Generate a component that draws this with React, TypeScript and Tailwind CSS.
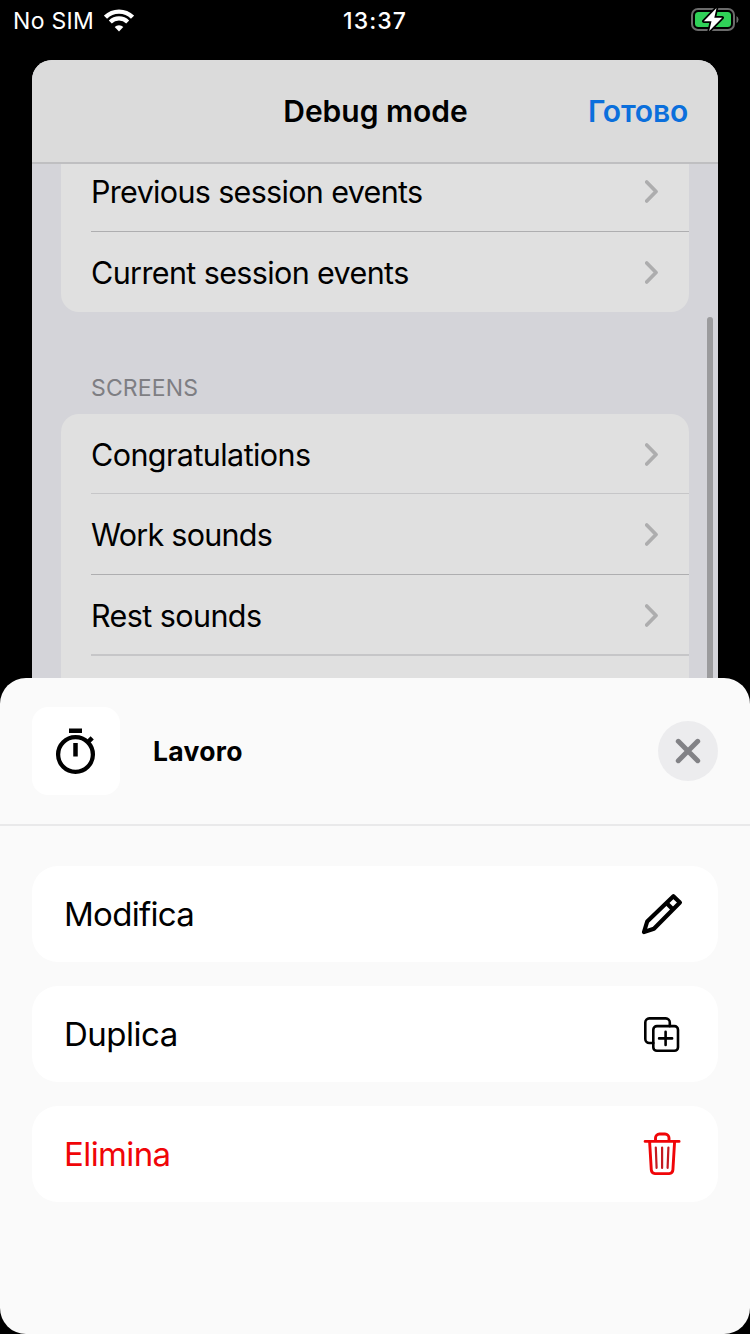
import type { ReactNode } from "react";

function Chevron() {
  return (
    <svg width="14" height="25" viewBox="0.3 -0.5 14 25" fill="none">
      <path d="M2 2.5 11.300 12 2 21.500" stroke="#adadae" strokeWidth="3.700" strokeLinecap="round" strokeLinejoin="round" />
    </svg>
  );
}

function Row({ label, tracking, divider }: { label: string; tracking: string; divider: string }) {
  return (
    <div className="pl-[30px]">
      <div className={`flex items-center justify-between pt-px pr-[30px] ${divider}`}>
        <span className={`pt-px text-[30.5px] whitespace-nowrap ${tracking}`}>{label}</span>
        <Chevron />
      </div>
    </div>
  );
}

function Action({ label, className, children }: { label: string; className: string; children: ReactNode }) {
  return (
    <button className="flex h-24 w-full items-center justify-between rounded-[26px] bg-white pr-8 pl-8">
      <span className={className}>{label}</span>
      {children}
    </button>
  );
}

function StatusBar() {
  return (
    <header className="grid h-[60px] grid-cols-3 items-start text-[23px] leading-[40px] text-white">
      <div className="flex h-[41px] items-center gap-[10px] pl-[13px]">
        <span className="tracking-[0.3px]">No SIM</span>
        <svg className="mb-px" width="30" height="23" viewBox="0 0 30 23" fill="none" stroke="white">
          <path d="M1.500 8.200a19.200 19.200 0 0 1 27 0" strokeWidth="4.400" />
          <path d="M6.300 13a12.300 12.300 0 0 1 17.400 0" strokeWidth="4.200" />
          <path d="M15 22.500 10.700 18a6.100 6.100 0 0 1 8.600 0Z" fill="white" stroke="none" />
        </svg>
      </div>
      <span className="pt-px text-center font-medium tracking-[1.1px]">13:37</span>
      <div className="flex h-[39px] items-center justify-end pr-[11px]">
        <svg width="48" height="25" viewBox="0 0 48 25" fill="none">
          <rect x="1" y="2" width="42" height="21" rx="6" stroke="#6b6b6b" strokeWidth="2" />
          <rect x="4" y="5" width="36" height="15" rx="3.500" fill="#30d158" />
          <path d="M45.500 9v7q2-1 2-3.500t-2-3.500Z" fill="#6b6b6b" />
          <path
            d="M25.500 1 12.800 14.200h7.700L18.200 24 31.200 10.800h-7.900Z"
            fill="white"
            stroke="black"
            strokeWidth="3.500"
            strokeLinejoin="round"
            paintOrder="stroke"
          />
        </svg>
      </div>
    </header>
  );
}

export default function App() {
  return (
    <div className="relative h-[1334px] w-[750px] overflow-hidden bg-black font-['Inter','Liberation_Sans',sans-serif] text-black">
      <StatusBar />

      <main className="mx-8 h-[640px] overflow-hidden rounded-t-[20px] bg-[#d4d4d9]">
        <div className="grid h-[104px] grid-cols-[1fr_auto_1fr] items-center border-b-2 border-[#bfbfc1] bg-[#dbdbdb] pt-px pr-[30px] text-[30px] font-semibold">
          <span />
          <h1 className="pl-[31px] tracking-[0px]">Debug mode</h1>
          <button className="justify-self-end tracking-[-0.2px] text-[#0b6fdc]">Готово</button>
        </div>
        <div className="flex overflow-hidden">
          <div className="ml-[29px] w-[628px]">
            <section className="-mt-[13px] rounded-b-[18px] bg-[#e0e0e0]">
              <Row label="Previous session events" tracking="tracking-[-0.67px]" divider="h-[81px] border-b border-[#aeaeb0]" />
              <Row label="Current session events" tracking="tracking-[-0.62px]" divider="h-[80px]" />
            </section>
            <h2 className="mt-[60.5px] mb-[11.5px] pl-[30px] text-[23px] leading-[30px] tracking-[0.15px] text-[#7e7e83]">
              SCREENS
            </h2>
            <section className="rounded-t-[18px] bg-[#e0e0e0]">
              <Row label="Congratulations" tracking="tracking-[-0.58px]" divider="h-[80px] border-b border-[#c6c6c8]" />
              <Row label="Work sounds" tracking="tracking-[-0.75px]" divider="h-[81px] border-b border-[#aeaeb0]" />
              <Row label="Rest sounds" tracking="tracking-[-0.58px]" divider="h-[81px] border-b-2 border-[#c6c6c8]" />
              <div className="h-10" />
            </section>
          </div>
          <div className="mt-[153px] ml-[18px] h-[400px] w-[6px] rounded-full bg-[#9b9b9d]" />
        </div>
      </main>

      <section className="absolute inset-x-0 top-[678px] h-[656px] rounded-[26px] bg-[#fafafa]">
        <div className="flex h-[148px] items-center border-b-2 border-[#e9e9ea] px-8">
          <div className="flex size-[88px] items-center justify-center rounded-[16px] bg-white">
            <svg width="48" height="48" viewBox="0.5 -0.5 48 48" fill="none" stroke="black">
              <circle cx="24" cy="27" r="17.400" strokeWidth="4.300" />
              <path d="M17.500 3.200h13M24 15.500v13.500M36.500 14.500l4.200-4.200" strokeWidth="4.500" />
            </svg>
          </div>
          <h2 className="ml-8 pt-[2px] pl-px text-[26.5px] font-bold tracking-[0.3px]">Lavoro</h2>
          <button aria-label="Chiudi" className="ml-auto flex size-[60px] items-center justify-center rounded-full bg-[#ececee]">
            <svg width="26" height="26" viewBox="0 0 26 26" fill="none">
              <path d="m3.300 3.300 19.400 19.400m0-19.400L3.300 22.700" stroke="#828286" strokeWidth="5" strokeLinecap="round" />
            </svg>
          </button>
        </div>
        <div className="flex flex-col gap-6 px-8 pt-10">
          <Action label="Modifica" className="pt-[2px] text-[33px] tracking-[-0.7px]">
            <svg width="48" height="48" viewBox="0 0 48 48" fill="none" stroke="black" strokeWidth="4.200" strokeLinejoin="round">
              <path d="M6 42 9.200 31.500 35.400 6.200l6.500 6.300L15.900 38.700Z" />
              <path d="m28.500 12.900 6.500 6.500" />
            </svg>
          </Action>
          <Action label="Duplica" className="pt-[2px] text-[33px] tracking-[-0.5px]">
            <svg width="48" height="48" viewBox="0 0 48 48" fill="none" stroke="black" strokeWidth="2.600" strokeLinejoin="round" strokeLinecap="round">
              <rect x="15.300" y="16.100" width="24.700" height="24.700" rx="3.600" />
              <path d="M27.600 21.800v13.200M21.100 28.400h13M15.300 33h-4a4 4 0 0 1-4-4V12.400a4 4 0 0 1 4-4h16.500a4 4 0 0 1 4 4v3.700" />
            </svg>
          </Action>
          <Action label="Elimina" className="pt-[2px] text-[33px] tracking-[-0.6px] text-[#f00508]">
            <svg width="48" height="48" viewBox="0.4 0 48 48" fill="none" stroke="#f00508" strokeWidth="2.900" strokeLinejoin="round" strokeLinecap="round">
              <path d="M7.500 11.400h34M12 11.500l1.700 28.400a4 4 0 0 0 3.700 3.700h14.200a4 4 0 0 0 3.700-3.700l1.700-28.400M17.900 11v-3a4 4 0 0 1 4-4h5.500a4 4 0 0 1 4 4v3" />
              <path d="m18.200 17.500.8 20.400M24.500 17.500v20.400M30.800 17.500l-.8 20.400" stroke="#c41a20" strokeWidth="2.200" />
            </svg>
          </Action>
        </div>
      </section>
    </div>
  );
}
